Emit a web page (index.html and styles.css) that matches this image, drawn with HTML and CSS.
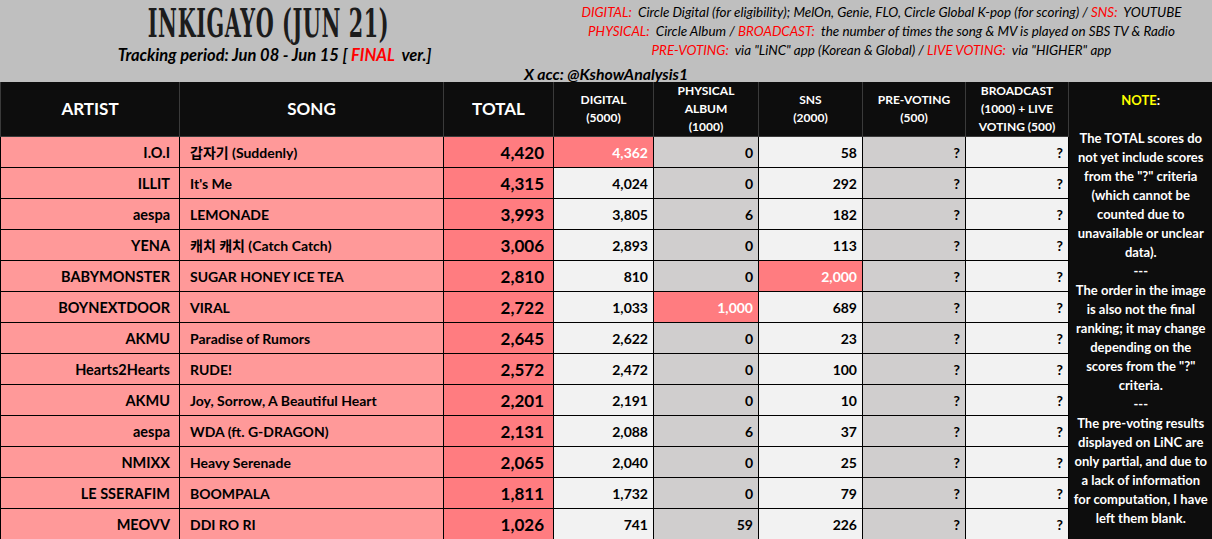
FILE: index.html
```html
<!DOCTYPE html>
<html lang="en">
<head>
    <meta charset="UTF-8">
    <meta name="viewport" content="width=device-width, initial-scale=1.0">
    <title>Inkigayo (Jun 21)</title>
    <link rel="stylesheet" href="styles.css">
</head>
<body>
    <div class="header">
        <div class="header-top">
            <div class="header-left">
                <h1 class="title">INKIGAYO (JUN 21)</h1>
                <p class="period">Tracking period: Jun 08 - Jun 15 [ <span class="red">FINAL</span>&nbsp; ver.]</p>
            </div>
            <div class="header-right">
                <p><span class="red">DIGITAL:</span>&nbsp; Circle Digital (for eligibility); MelOn, Genie, FLO, Circle Global K-pop (for scoring) / <span class="red">SNS:</span>&nbsp; YOUTUBE</p>
                <p><span class="red">PHYSICAL:</span>&nbsp; Circle Album / <span class="red">BROADCAST:</span>&nbsp; the number of times the song &amp; MV is played on SBS TV &amp; Radio</p>
                <p><span class="red">PRE-VOTING:</span>&nbsp; via "LiNC" app (Korean &amp; Global) / <span class="red">LIVE VOTING:</span>&nbsp; via "HIGHER" app</p>
            </div>
        </div>
        <p class="xacc">X acc: @KshowAnalysis1</p>
    </div>

    <table class="chart">
        <colgroup>
            <col style="width:179px">
            <col style="width:264px">
            <col style="width:110px">
            <col style="width:100px">
            <col style="width:105px">
            <col style="width:104px">
            <col style="width:103px">
            <col style="width:103px">
            <col style="width:144px">
        </colgroup>
        <tr class="head">
            <th class="big">ARTIST</th>
            <th class="big">SONG</th>
            <th class="big">TOTAL</th>
            <th>DIGITAL<br>(5000)</th>
            <th>PHYSICAL<br>ALBUM<br>(1000)</th>
            <th>SNS<br>(2000)</th>
            <th>PRE-VOTING<br>(500)</th>
            <th>BROADCAST<br>(1000) + LIVE<br>VOTING (500)</th>
            <td class="note" rowspan="14">
                <span class="yellow">NOTE</span>:<br>
                <br>
                The TOTAL scores do<br>
                not yet include scores<br>
                from the "?" criteria<br>
                (which cannot be<br>
                counted due to<br>
                unavailable or unclear<br>
                data).<br>
                ---<br>
                The order in the image<br>
                is also not the final<br>
                ranking; it may change<br>
                depending on the<br>
                scores from the "?"<br>
                criteria.<br>
                ---<br>
                The pre-voting results<br>
                displayed on LiNC are<br>
                only partial, and due to<br>
                a lack of information<br>
                for computation, I have<br>
                left them blank.
            </td>
        </tr>
        <tr>
            <td class="artist">I.O.I</td><td class="song">갑자기 (Suddenly)</td><td class="total">4,420</td>
            <td class="light hot">4,362</td><td class="grey">0</td><td class="light">58</td><td class="grey">?</td><td class="light">?</td>
        </tr>
        <tr>
            <td class="artist">ILLIT</td><td class="song">It's Me</td><td class="total">4,315</td>
            <td class="light">4,024</td><td class="grey">0</td><td class="light">292</td><td class="grey">?</td><td class="light">?</td>
        </tr>
        <tr>
            <td class="artist">aespa</td><td class="song">LEMONADE</td><td class="total">3,993</td>
            <td class="light">3,805</td><td class="grey">6</td><td class="light">182</td><td class="grey">?</td><td class="light">?</td>
        </tr>
        <tr>
            <td class="artist">YENA</td><td class="song">캐치 캐치 (Catch Catch)</td><td class="total">3,006</td>
            <td class="light">2,893</td><td class="grey">0</td><td class="light">113</td><td class="grey">?</td><td class="light">?</td>
        </tr>
        <tr>
            <td class="artist">BABYMONSTER</td><td class="song">SUGAR HONEY ICE TEA</td><td class="total">2,810</td>
            <td class="light">810</td><td class="grey">0</td><td class="light hot">2,000</td><td class="grey">?</td><td class="light">?</td>
        </tr>
        <tr>
            <td class="artist">BOYNEXTDOOR</td><td class="song">VIRAL</td><td class="total">2,722</td>
            <td class="light">1,033</td><td class="grey hot">1,000</td><td class="light">689</td><td class="grey">?</td><td class="light">?</td>
        </tr>
        <tr>
            <td class="artist">AKMU</td><td class="song">Paradise of Rumors</td><td class="total">2,645</td>
            <td class="light">2,622</td><td class="grey">0</td><td class="light">23</td><td class="grey">?</td><td class="light">?</td>
        </tr>
        <tr>
            <td class="artist">Hearts2Hearts</td><td class="song">RUDE!</td><td class="total">2,572</td>
            <td class="light">2,472</td><td class="grey">0</td><td class="light">100</td><td class="grey">?</td><td class="light">?</td>
        </tr>
        <tr>
            <td class="artist">AKMU</td><td class="song">Joy, Sorrow, A Beautiful Heart</td><td class="total">2,201</td>
            <td class="light">2,191</td><td class="grey">0</td><td class="light">10</td><td class="grey">?</td><td class="light">?</td>
        </tr>
        <tr>
            <td class="artist">aespa</td><td class="song">WDA (ft. G-DRAGON)</td><td class="total">2,131</td>
            <td class="light">2,088</td><td class="grey">6</td><td class="light">37</td><td class="grey">?</td><td class="light">?</td>
        </tr>
        <tr>
            <td class="artist">NMIXX</td><td class="song">Heavy Serenade</td><td class="total">2,065</td>
            <td class="light">2,040</td><td class="grey">0</td><td class="light">25</td><td class="grey">?</td><td class="light">?</td>
        </tr>
        <tr>
            <td class="artist">LE SSERAFIM</td><td class="song">BOOMPALA</td><td class="total">1,811</td>
            <td class="light">1,732</td><td class="grey">0</td><td class="light">79</td><td class="grey">?</td><td class="light">?</td>
        </tr>
        <tr>
            <td class="artist">MEOVV</td><td class="song">DDI RO RI</td><td class="total">1,026</td>
            <td class="light">741</td><td class="grey">59</td><td class="light">226</td><td class="grey">?</td><td class="light">?</td>
        </tr>
    </table>
</body>
</html>
```

FILE: styles.css
```css
:root {
    --head-grey: #bfbfbf;
    --black: #0d0d0d;
    --pink: #ff9999;
    --hot: #ff7c80;
    --grey: #d0cece;
    --light: #f2f2f2;
    --red: #ff0000;
}

body {
    margin: 0;
    width: 1212px;
    height: 539px;
    overflow: hidden;
    background: var(--light);
    font-family: Lato, Carlito, "Noto Sans CJK KR", sans-serif;
    color: #000;
}

p {
    margin: 0;
}

.red {
    color: var(--red);
}

.yellow {
    color: #ffff00;
}

.header {
    background: var(--head-grey);
    height: 82px;
}

.header-top {
    display: flex;
    height: 65px;
}

.header-left {
    width: 545px;
    text-align: center;
}

.title {
    margin: 0 0 0 -8px;
    height: 46px;
    font-family: "DejaVu Serif Condensed", "DejaVu Serif", serif;
    font-weight: bold;
    font-size: 39px;
    line-height: 46px;
    color: #1c1c1c;
    transform: scaleX(0.59);
    letter-spacing: 1px;
    white-space: nowrap;
}

.period {
    font-size: 16.5px;
    font-weight: bold;
    font-style: italic;
    line-height: 18px;
    padding-left: 4px;
}

.header-right {
    flex: 1;
    text-align: center;
    padding-top: 3px;
    padding-left: 6px;
    font-size: 13.4px;
    font-style: italic;
    line-height: 19px;
    white-space: nowrap;
}

.xacc {
    text-align: center;
    font-size: 15.8px;
    font-weight: bold;
    font-style: italic;
    line-height: 17px;
}

.chart {
    border-collapse: collapse;
    table-layout: fixed;
    width: 1212px;
}

.chart th {
    background: var(--black);
    color: #fff;
    font-size: 12px;
    line-height: 18px;
    height: 54px;
    padding: 0;
    border: 1px solid #3a3a3a;
    border-top: none;
}

.chart th.big {
    font-size: 17px;
}

.chart td {
    height: 30px;
    padding: 0 5px;
    border: 1px solid #000;
    font-size: 14px;
    font-weight: bold;
    text-align: right;
    white-space: nowrap;
    overflow: hidden;
}

.chart td.artist {
    background: var(--pink);
    padding-right: 9px;
    font-size: 14.5px;
}

.chart td.song {
    background: var(--pink);
    text-align: left;
    padding-left: 10px;
}

.chart td.total {
    background: var(--hot);
    font-size: 17px;
    padding-right: 9px;
}

.chart td.light {
    background: var(--light);
}

.chart td.grey {
    background: var(--grey);
}

.chart td.hot {
    background: var(--hot);
    color: #fff;
}

.chart td.note {
    background: var(--black);
    color: #fff;
    vertical-align: top;
    text-align: center;
    padding: 9px 0 0;
    font-size: 13px;
    line-height: 19px;
    border: none;
}
```
